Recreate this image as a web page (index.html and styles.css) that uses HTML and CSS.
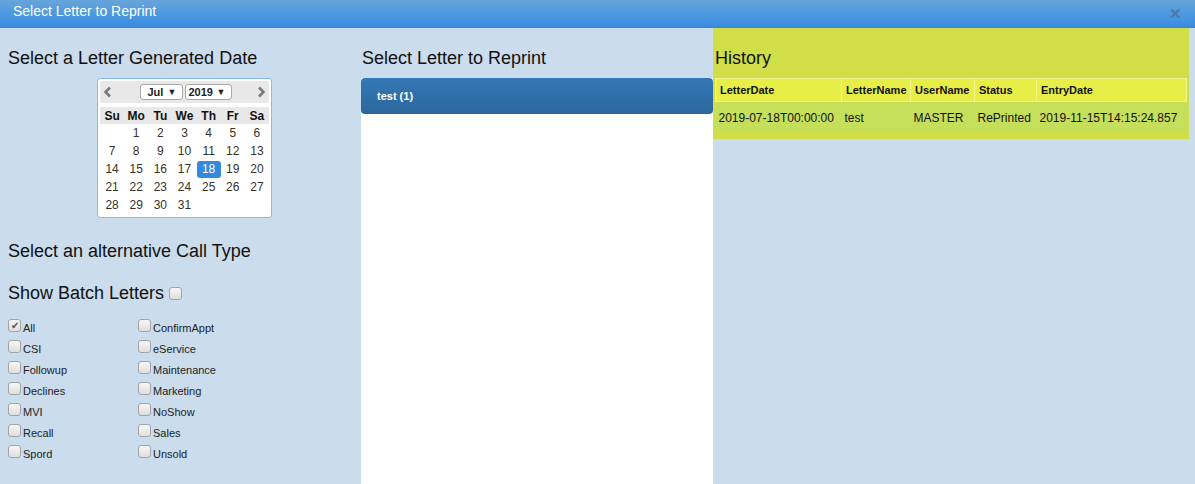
FILE: index.html
```html
<!DOCTYPE html>
<html>
<head>
<meta charset="utf-8">
<link rel="stylesheet" href="styles.css">
</head>
<body>
<div class="titlebar">
  <span class="title">Select Letter to Reprint</span>
  <span class="close">&#x2715;</span>
</div>
<div class="content">
  <div class="col-left">
    <h2 class="heading">Select a Letter Generated Date</h2>
    <div class="cal-wrap">
      <div class="calendar">
        <div class="cal-head">
          <span class="arrow prev"><svg width="9" height="12" viewBox="0 0 9 12"><path d="M7 1.5 L2.5 6 L7 10.5" fill="none" stroke="#7a7a7a" stroke-width="2.6"/></svg></span>
          <div class="selects">
            <span class="sel sel-month">Jul<span class="tri">&#9660;</span></span>
            <span class="sel sel-year">2019<span class="tri">&#9660;</span></span>
          </div>
          <span class="arrow next"><svg width="9" height="12" viewBox="0 0 9 12"><path d="M2 1.5 L6.5 6 L2 10.5" fill="none" stroke="#7a7a7a" stroke-width="2.6"/></svg></span>
        </div>
        <table class="cal-table">
          <thead>
            <tr><th>Su</th><th>Mo</th><th>Tu</th><th>We</th><th>Th</th><th>Fr</th><th>Sa</th></tr>
          </thead>
          <tbody>
            <tr><td></td><td>1</td><td>2</td><td>3</td><td>4</td><td>5</td><td>6</td></tr>
            <tr><td>7</td><td>8</td><td>9</td><td>10</td><td>11</td><td>12</td><td>13</td></tr>
            <tr><td>14</td><td>15</td><td>16</td><td>17</td><td><span class="sel-day">18</span></td><td>19</td><td>20</td></tr>
            <tr><td>21</td><td>22</td><td>23</td><td>24</td><td>25</td><td>26</td><td>27</td></tr>
            <tr><td>28</td><td>29</td><td>30</td><td>31</td><td></td><td></td><td></td></tr>
          </tbody>
        </table>
      </div>
    </div>
    <h2 class="heading h-calltype">Select an alternative Call Type</h2>
    <h2 class="heading h-batch">Show Batch Letters <span class="cb cb-batch"></span></h2>
    <div class="types">
      <label class="type"><span class="cb checked">&#10004;</span><span class="lbl">All</span></label>
      <label class="type"><span class="cb"></span><span class="lbl">ConfirmAppt</span></label>
      <label class="type"><span class="cb"></span><span class="lbl">CSI</span></label>
      <label class="type"><span class="cb"></span><span class="lbl">eService</span></label>
      <label class="type"><span class="cb"></span><span class="lbl">Followup</span></label>
      <label class="type"><span class="cb"></span><span class="lbl">Maintenance</span></label>
      <label class="type"><span class="cb"></span><span class="lbl">Declines</span></label>
      <label class="type"><span class="cb"></span><span class="lbl">Marketing</span></label>
      <label class="type"><span class="cb"></span><span class="lbl">MVI</span></label>
      <label class="type"><span class="cb"></span><span class="lbl">NoShow</span></label>
      <label class="type"><span class="cb"></span><span class="lbl">Recall</span></label>
      <label class="type"><span class="cb"></span><span class="lbl">Sales</span></label>
      <label class="type"><span class="cb"></span><span class="lbl">Spord</span></label>
      <label class="type"><span class="cb"></span><span class="lbl">Unsold</span></label>
    </div>
  </div>
  <div class="col-mid">
    <h2 class="heading">Select Letter to Reprint</h2>
    <div class="letters">
      <div class="letter-item">test (1)</div>
    </div>
  </div>
  <div class="col-right">
    <div class="history">
      <h2 class="heading">History</h2>
      <table class="hist-table">
        <thead>
          <tr><th class="c1">LetterDate</th><th class="c2">LetterName</th><th class="c3">UserName</th><th class="c4">Status</th><th class="c5">EntryDate</th></tr>
        </thead>
        <tbody>
          <tr><td>2019-07-18T00:00:00</td><td>test</td><td>MASTER</td><td>RePrinted</td><td>2019-11-15T14:15:24.857</td></tr>
        </tbody>
      </table>
    </div>
  </div>
</div>
</body>
</html>
```
FILE: styles.css
```css
html, body {
  margin: 0;
  padding: 0;
}
body {
  width: 1195px;
  height: 484px;
  overflow: hidden;
  background: #cbdcec;
  font-family: "Liberation Sans", Arial, sans-serif;
  color: #222;
}
.titlebar {
  height: 27px;
  border-bottom: 1px solid #3f86c6;
  background: linear-gradient(to bottom, #67a5da 0%, #4b98e0 55%, #3a8ce0 100%);
  display: flex;
  align-items: center;
  justify-content: space-between;
  padding: 0 13px;
}
.title {
  color: #fff;
  font-size: 14px;
  margin-top: -6px;
}
.close {
  color: #4f78a6;
  font-size: 15px;
  font-weight: bold;
  margin-top: 1px;
}
.content {
  display: flex;
  height: 456px;
}
.heading {
  margin: 0;
  font-weight: normal;
  font-size: 18px;
  line-height: 22px;
  color: #111;
}
.col-left {
  width: 353px;
  padding: 19px 0 0 8px;
}
.cal-wrap {
  display: flex;
  justify-content: center;
  margin-top: 9px;
}
.calendar {
  width: 169px;
  height: 134px;
  border: 1px solid #86bbea;
  border-radius: 3px;
  background: #fff;
  padding: 2px;
}
.cal-head {
  height: 22px;
  background: #e8e8e8;
  border-radius: 2px;
  display: flex;
  align-items: center;
  justify-content: space-between;
  padding: 0 3px;
}
.arrow {
  display: flex;
  width: 9px;
  height: 12px;
}
.selects {
  display: flex;
  gap: 2px;
  margin-left: 2px;
  margin-top: -1px;
}
.sel {
  height: 14px;
  border: 1px solid #a8a8a8;
  border-radius: 3px;
  background: #fff;
  font-size: 11px;
  line-height: 14px;
  font-weight: bold;
  color: #222;
  display: flex;
  justify-content: space-between;
  box-sizing: content-box;
}
.sel-month { width: 29px; padding: 0 5px 0 7px; }
.sel-year { width: 37px; padding: 0 5px 0 3px; }
.tri {
  font-size: 9px;
  color: #222;
}
.cal-table {
  width: 100%;
  border-collapse: collapse;
  margin-top: 4px;
  table-layout: fixed;
}
.cal-table th {
  background: #e8e8e8;
  font-size: 12px;
  font-weight: bold;
  height: 17px;
  padding: 0;
  color: #111;
}
.cal-table td {
  text-align: center;
  font-size: 12px;
  color: #3b3027;
  height: 18px;
  padding: 0;
}
.sel-day {
  display: inline-block;
  width: 24px;
  height: 17px;
  line-height: 17px;
  background: #3589dc;
  color: #fff;
  border-radius: 3px;
}
.h-calltype {
  margin-top: 22px;
}
.h-batch {
  margin-top: 20px;
  display: flex;
  align-items: center;
}
.cb {
  display: inline-flex;
  align-items: center;
  justify-content: center;
  width: 11px;
  height: 11px;
  border: 1px solid #a3a3a3;
  border-radius: 3px;
  background: linear-gradient(to bottom, #f7f7f7, #dedede);
  font-size: 10px;
  color: #555;
  line-height: 1;
  flex: none;
}
.cb-batch {
  margin-left: 5px;
  margin-top: 1px;
}
.types {
  display: grid;
  grid-template-columns: 130px 130px;
  grid-auto-rows: 21px;
  margin-top: 14px;
}
.type {
  display: flex;
  align-items: flex-start;
  font-size: 11px;
  line-height: 13px;
  color: #222;
  padding-top: 1px;
}
.type .cb {
  margin-right: 2px;
}
.lbl {
  padding-top: 3px;
}
.col-mid {
  width: 352px;
  padding-top: 19px;
  display: flex;
  flex-direction: column;
}
.col-mid .heading {
  padding-left: 1px;
  margin-bottom: 9px;
}
.letters {
  flex: 1;
  background: #fff;
}
.letter-item {
  height: 36px;
  line-height: 36px;
  background: linear-gradient(to bottom, #3479b6, #2b679c);
  border-radius: 4px;
  color: #fff;
  font-size: 11px;
  font-weight: bold;
  padding-left: 16px;
}
.col-right {
  width: 476px;
}
.history {
  background: #d0de47;
  padding: 19px 4px 7px 2px;
}
.history .heading {
  margin-bottom: 9px;
}
.hist-table {
  border-collapse: collapse;
  width: 470px;
  table-layout: fixed;
}
.hist-table th {
  background: #e8ee48;
  border: 1px solid #f2f58c;
  font-size: 11px;
  font-weight: bold;
  text-align: left;
  padding: 0 4px;
  height: 22px;
  color: #111;
}
.hist-table td {
  background: #c6df5a;
  font-size: 12px;
  text-align: left;
  padding: 1px 4px 0 3px;
  height: 29px;
  color: #111;
  white-space: nowrap;
}
.c1 { width: 117px; }
.c2 { width: 60px; }
.c3 { width: 55px; }
.c4 { width: 53px; }
.c5 { width: 141px; }
```
